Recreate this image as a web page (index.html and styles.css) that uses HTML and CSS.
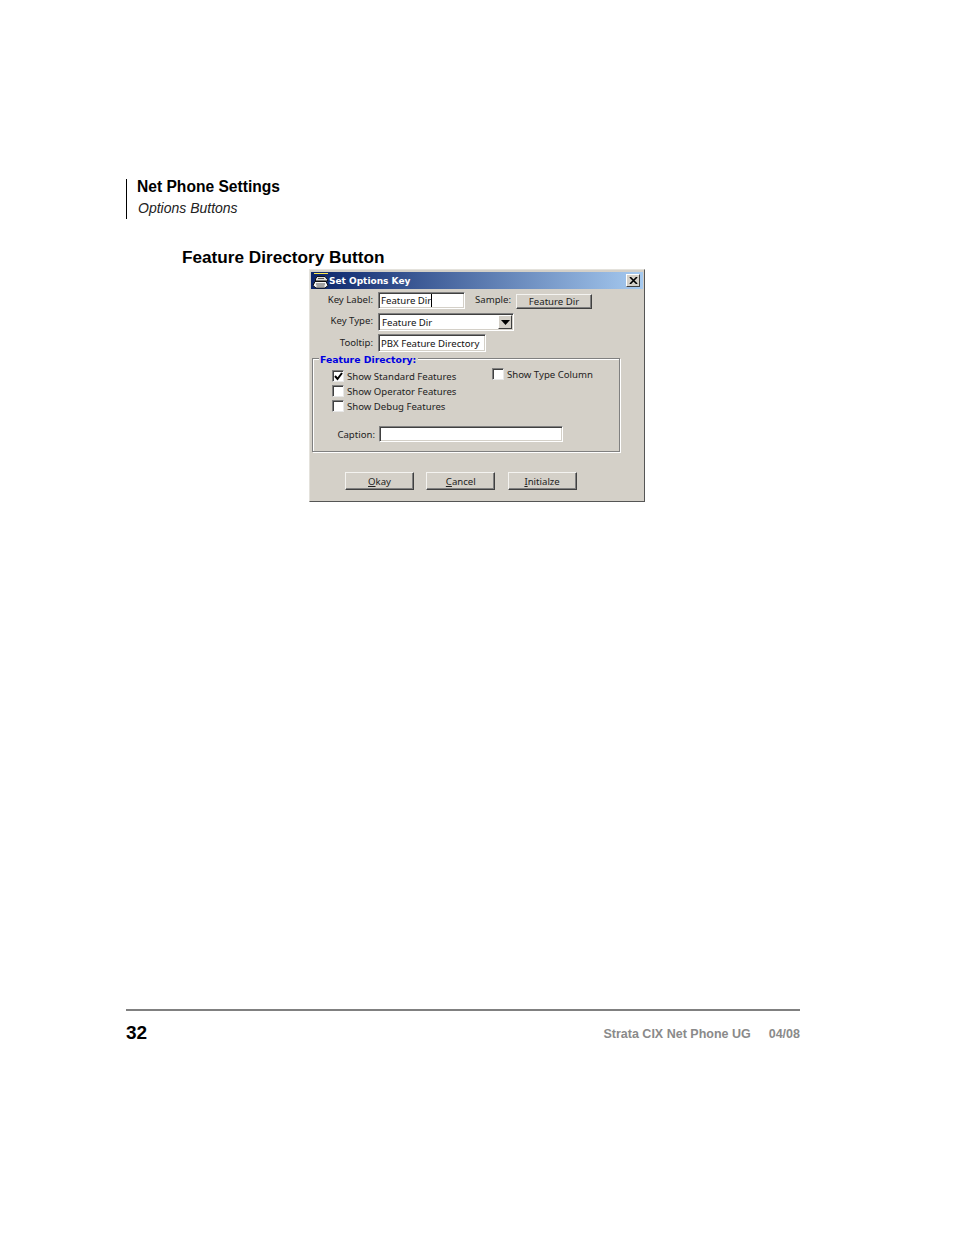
FILE: index.html
```html
<!DOCTYPE html>
<html lang="en">
<head>
<meta charset="utf-8">
<title>Net Phone Settings</title>
<link rel="stylesheet" href="styles.css">
</head>
<body>
<div class="page">
  <header class="runhead">
    <div class="chapter">Net Phone Settings</div>
    <div class="section">Options Buttons</div>
  </header>
  <h2 class="heading">Feature Directory Button</h2>
  <div class="dialog">
    <div class="titlebar">
      <svg class="appicon" width="16" height="16" viewBox="0 0 16 16">
        <rect x="1" y="0" width="14" height="1" fill="#ffe94a"/>
        <path d="M4 3.500h8l2.500 3v1.500h-12V6z" fill="#dcdcdc" stroke="#101010" stroke-width="1"/>
        <path d="M5 5.500h6" stroke="#555" stroke-width="1"/>
        <path d="M2 8.500h11l2 4-3 2.500H3l-3-2.500z" fill="#f4f4f4" stroke="#101010" stroke-width="1"/>
        <path d="M3 11h9M3.500 13h8" stroke="#555" stroke-width="1"/>
      </svg>
      <span class="titletext">Set Options Key</span>
      <span class="closebtn">
        <svg width="9" height="7" viewBox="0 0 9 7"><path d="M1 0l7 7M8 0l-7 7" stroke="#000" stroke-width="1.6"/></svg>
      </span>
    </div>
    <div class="row row-a">
      <span class="label">Key Label:</span>
      <div class="field field-label"><span class="caret">Feature Dir</span></div>
      <span class="label label-sample">Sample:</span>
      <div class="btn btn-sample">Feature Dir</div>
    </div>
    <div class="row row-b">
      <span class="label">Key Type:</span>
      <div class="field field-type">Feature Dir
        <span class="dropbtn"><svg width="9" height="5" viewBox="0 0 9 5"><path d="M0 0h9L4.500 5z" fill="#000"/></svg></span>
      </div>
    </div>
    <div class="row row-c">
      <span class="label">Tooltip:</span>
      <div class="field field-tip">PBX Feature Directory</div>
    </div>
    <section class="group">
      <div class="legend">Feature Directory:</div>
      <div class="options">
        <div class="col-left">
          <div class="check"><span class="box"><svg width="9" height="9" viewBox="0 0 9 9"><path d="M1 4l2.500 3L8 1" fill="none" stroke="#000" stroke-width="2"/></svg></span>Show Standard Features</div>
          <div class="check"><span class="box"></span>Show Operator Features</div>
          <div class="check"><span class="box"></span>Show Debug Features</div>
        </div>
        <div class="col-right">
          <div class="check"><span class="box"></span>Show Type Column</div>
        </div>
      </div>
      <div class="caption-row">
        <span class="caption-label">Caption:</span>
        <div class="field field-caption"></div>
      </div>
    </section>
    <div class="actions">
      <div class="btn btn-action"><u>O</u>kay</div>
      <div class="btn btn-action"><u>C</u>ancel</div>
      <div class="btn btn-action"><u>I</u>nitialze</div>
    </div>
  </div>
  <footer class="foot">
    <div class="pageno">32</div>
    <div class="doc"><span>Strata CIX Net Phone UG</span><span>04/08</span></div>
  </footer>
</div>
</body>
</html>
```
FILE: styles.css
```css
html, body { margin: 0; padding: 0; background: #fff; }
.page {
  box-sizing: border-box;
  width: 954px;
  height: 1235px;
  padding: 179px 0 0 126px;
  font-family: "Liberation Sans", Arial, sans-serif;
  color: #000;
}
.runhead {
  box-sizing: border-box;
  height: 40px;
  border-left: 1px solid #000;
  padding-left: 10px;
}
.chapter { font-size: 15.600px; font-weight: 700; line-height: 16px; }
.section { margin-top: 4px; font-size: 14px; font-style: italic; line-height: 18px; color: #222; padding-left: 1px; }
.heading {
  margin: 28px 0 0 56px;
  font-size: 17.200px;
  font-weight: 700;
  line-height: 21px;
  height: 21px;
}

/* dialog */
.dialog {
  box-sizing: border-box;
  width: 336px;
  height: 233px;
  margin: 1px 0 0 183px;
  padding: 2px 1px 0;
  background: #d4d0c8;
  border: 1px solid;
  border-color: #e4e2dc #555 #555 #e4e2dc;
  font-family: "Noto Sans", "Open Sans", sans-serif;
  font-size: 9.600px;
  color: #222;
}
.titlebar {
  display: flex;
  align-items: center;
  height: 17px;
  padding: 0 3px 0 2px;
  background: linear-gradient(90deg, #0a246a 0%, #a6caf0 100%);
  color: #fff;
  font-family: "DejaVu Sans", sans-serif;
  font-weight: 700;
  font-size: 9px;
}
.appicon { flex: none; }
.titletext { white-space: nowrap; }
.closebtn {
  box-sizing: border-box;
  display: flex;
  align-items: center;
  justify-content: center;
  width: 14px;
  height: 13px;
  margin-left: auto;
  background: #d4d0c8;
  border: 1px solid;
  border-color: #fff #404040 #404040 #fff;
}
.row { display: flex; align-items: center; }
.row-a { margin-top: 3px; height: 17px; }
.row-b { margin-top: 4px; height: 18px; }
.row-c { margin-top: 3px; height: 18px; }
.label { box-sizing: border-box; width: 62px; padding-bottom: 2px; text-align: right; white-space: nowrap; flex: none; }
.row-b .label { padding-bottom: 3px; }
.label-sample { width: 46px; }
.field {
  box-sizing: border-box;
  background: #fff;
  border: 1px solid;
  border-color: #808080 #fff #fff #808080;
  box-shadow: inset 1px 1px 0 #404040, inset -1px -1px 0 #d4d0c8;
  padding-left: 2px;
  color: #111;
  white-space: nowrap;
  line-height: 15px;
}
.row .field { margin-left: 5px; height: 100%; }
.field-label { width: 87px; }
.field-type { width: 136px; position: relative; padding: 1px 0 0 3px; }
.field-tip { width: 108px; padding-top: 1px; }
.caret { display: inline-block; border-right: 1px solid #000; line-height: 13px; }
.dropbtn {
  box-sizing: border-box;
  position: absolute;
  right: 1px;
  top: 1px;
  bottom: 1px;
  width: 14px;
  display: flex;
  align-items: center;
  justify-content: center;
  background: #d4d0c8;
  border: 1px solid;
  border-color: #fff #404040 #404040 #fff;
}
.btn {
  box-sizing: border-box;
  display: flex;
  align-items: center;
  justify-content: center;
  background: #d4d0c8;
  border: 1px solid;
  border-color: #f4f3f0 #404040 #404040 #f4f3f0;
  box-shadow: inset -1px -1px 0 #808080;
  white-space: nowrap;
}
.btn-sample { width: 76px; height: 15px; margin-left: 5px; margin-top: 2px; padding-bottom: 1px; }

/* group */
.group {
  box-sizing: border-box;
  position: relative;
  width: 308px;
  height: 94px;
  margin: 6px 0 0 1px;
  border: 1px solid #808080;
  box-shadow: 1px 1px 0 #fff, inset 1px 1px 0 #fff;
}
.legend {
  position: absolute;
  left: 6px;
  top: -6px;
  padding: 0 2px 0 1px;
  background: #d4d0c8;
  color: #0000e0;
  font-family: "DejaVu Sans", sans-serif;
  font-weight: 700;
  font-size: 9.300px;
  line-height: 13px;
  white-space: nowrap;
}
.options { display: flex; align-items: flex-start; }
.col-left { width: 179px; box-sizing: border-box; padding: 11px 0 0 19px; display: flex; flex-direction: column; gap: 3px; }
.col-right { padding-top: 9px; }
.check { display: flex; align-items: center; height: 12px; white-space: nowrap; }
.box {
  box-sizing: border-box;
  flex: none;
  display: flex;
  align-items: center;
  justify-content: center;
  width: 12px;
  height: 12px;
  margin-right: 3px;
  background: #fff;
  border: 1px solid;
  border-color: #808080 #e8e8e8 #e8e8e8 #808080;
  box-shadow: inset 1px 1px 0 #404040;
}
.caption-row { display: flex; align-items: center; margin-top: 14px; }
.caption-label { box-sizing: border-box; width: 62px; text-align: right; white-space: nowrap; flex: none; }
.field-caption { width: 184px; height: 16px; margin-left: 4px; }
.actions { display: flex; margin: 20px 0 0 34px; }
.btn-action { width: 69px; height: 18px; margin-right: 12.300px; }

/* footer */
.foot {
  box-sizing: border-box;
  display: flex;
  align-items: flex-start;
  justify-content: space-between;
  width: 674px;
  margin-top: 507px;
  border-top: 2px solid #808080;
  padding-top: 10px;
}
.pageno { font-size: 19px; font-weight: 700; line-height: 23px; }
.doc { display: flex; gap: 18px; margin-top: 6px; font-size: 12.500px; font-weight: 700; line-height: 15px; color: #8a8a8a; }
```
